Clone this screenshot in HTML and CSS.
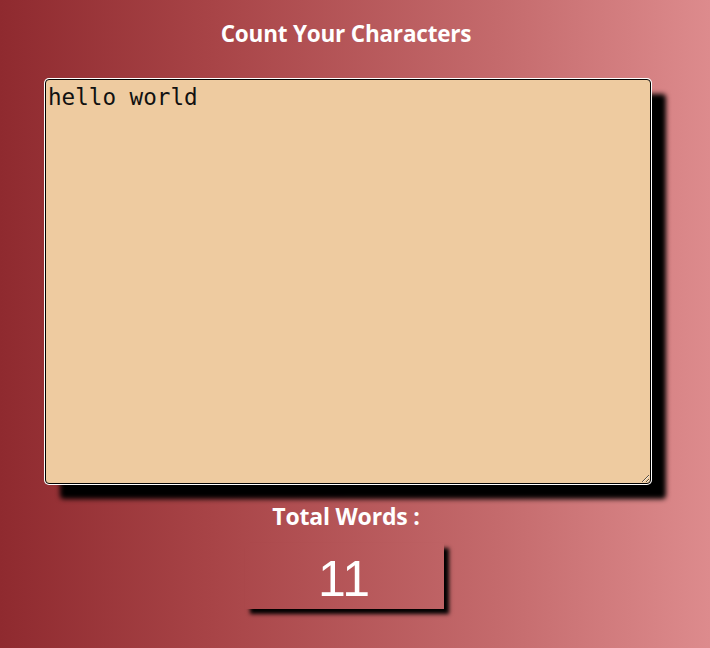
FILE: index.html
```html
<!DOCTYPE html>
<html lang="en">
<head>
<meta charset="utf-8">
<title>Count Your Characters</title>
<link rel="stylesheet" href="styles.css">
</head>
<body>
<main class="page">
  <h1 class="title">Count Your Characters</h1>
  <textarea class="input" id="input" spellcheck="false">hello world</textarea>
  <h2 class="label">Total Words :</h2>
  <div class="count">11</div>
</main>
<script src="script.js"></script>
</body>
</html>
```
FILE: styles.css
```css
html, body {
  margin: 0;
  padding: 0;
}
body {
  min-height: 648px;
  background: linear-gradient(to right, #8f2a2f 0%, #a84447 30%, #c46a6c 70%, #dd8b8d 100%);
  font-family: "Open Sans", "Liberation Sans", sans-serif;
  overflow: hidden;
}
.page {
  width: 692px;
  display: flex;
  flex-direction: column;
  align-items: center;
  padding-top: 18px;
}
.title {
  margin: 0;
  color: #fff;
  font-size: 22.5px;
  font-weight: 700;
  line-height: 31px;
  letter-spacing: -0.2px;
}
.input {
  box-sizing: border-box;
  width: 606px;
  height: 405px;
  margin: 30px 0 0 4px;
  padding: 4px 2px 1px;
  background: #eecba0;
  color: #111;
  border: 1px solid #000;
  border-radius: 4px;
  box-shadow: 0 0 0 1px #fff, 15px 15px 5px #000;
  font-family: "DejaVu Sans Mono", "Liberation Mono", monospace;
  font-size: 22.6px;
  line-height: 1.2;
  caret-color: #000;
  outline: none;
}
.label {
  margin: 18px 0 0;
  color: #fff;
  font-size: 23px;
  font-weight: 700;
  line-height: 28px;
  letter-spacing: -0.2px;
}
.count {
  box-sizing: border-box;
  width: 199px;
  height: 66px;
  margin: 13px 0 0 -4px;
  padding-top: 6px;
  color: #fff;
  font-family: "Liberation Sans", Arial, sans-serif;
  font-size: 50px;
  line-height: 60px;
  text-align: center;
  box-shadow: 5px 5px 4px #000;
}
```
FILE: script.js
```js
const t = document.getElementById('input');
t.focus();
t.setSelectionRange(t.value.length, t.value.length);
```
